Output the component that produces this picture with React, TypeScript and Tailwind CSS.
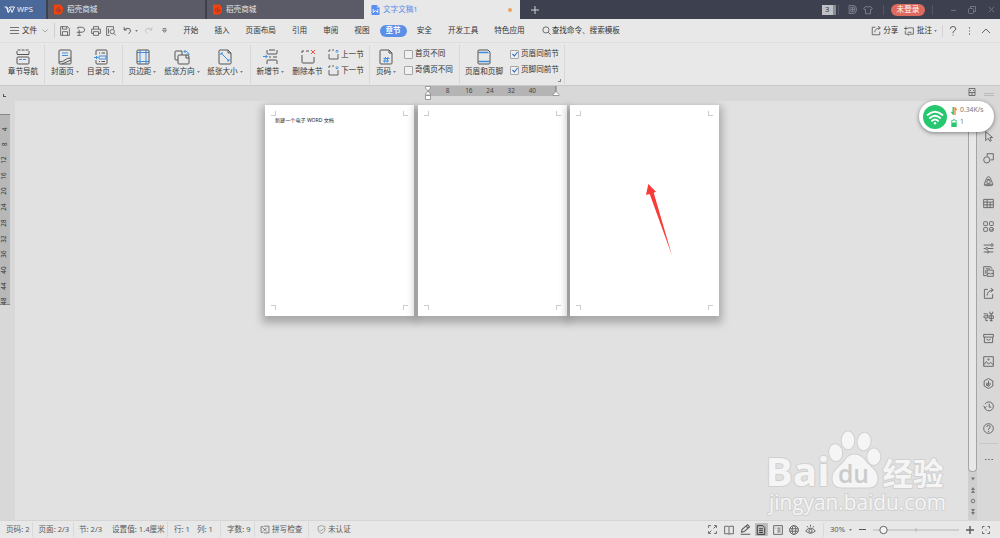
import type { ReactNode } from "react";

const FONT = "font-['Noto_Sans','Noto_Sans_CJK_SC',sans-serif]";

function Svg({ children, className = "size-3", box = "0 0 16 16", sw = 1.3 }: { children: ReactNode; className?: string; box?: string; sw?: number }) {
  return (
    <svg viewBox={box} className={`block shrink-0 ${className}`} fill="none" stroke="currentColor" strokeWidth={sw} strokeLinejoin="round">
      {children}
    </svg>
  );
}

const Caret = ({ className = "" }: { className?: string }) => (
  <svg viewBox="0 0 4 3" className={`block h-[2px] w-[3px] shrink-0 ${className}`}>
    <path d="M0 0h4L2 3z" fill="#777" />
  </svg>
);

function DocerTab() {
  return (
    <div className="flex h-[19px] w-[157px] shrink-0 items-center bg-[#5a5b66] pl-[6px] text-[#e3e3e6]">
      <svg viewBox="0 0 10 11" className="mr-1 block h-[11px] w-[9px]">
        <path d="M1 0h5.500q3.500 1.500 3.500 5.500T6.500 11H1Q0 11 0 10V1Q0 0 1 0z" fill="#f3420f" />
        <path d="M5.200 2.300v5M2.500 5q0 3.500 2.500 3.600T7.600 5M3.400 4.300l3.500 3.500" stroke="#8a3b28" strokeWidth=".9" fill="none" />
      </svg>
      <span>稻壳商城</span>
    </div>
  );
}

function TitleBar() {
  return (
    <header className="flex h-[19px] items-center bg-[#3d404e]">
      <div className="mr-[2px] flex h-full w-[46px] items-center bg-[#4a6899] pl-1 text-[#f0f3f8]">
        <Svg className="mr-[2px] h-[8px] w-[11px]" box="0 0 22 16" sw={2}>
          <path d="M1 2h5l3 11 4-8 3 8 5-11h-9M5 2l3 11M9 5l3-3" />
        </Svg>
        <span>WPS</span>
      </div>
      <DocerTab />
      <div className="w-[2px] shrink-0" />
      <DocerTab />
      <div className="flex h-full w-[156px] shrink-0 items-center bg-[#e8e8e8] pl-[7px] text-[#5a8fe8]">
        <svg viewBox="0 0 9 11" className="mr-[3px] block h-[10px] w-[9px]">
          <path d="M1 0h5l3 3v7q0 1-1 1H1Q0 11 0 10V1Q0 0 1 0z" fill="#5a8ff0" />
          <path d="M6 0v3h3z" fill="#a9c5fa" />
          <path d="M2 4.500v3.700l2.500-2 2.500 2V4.500" stroke="white" fill="none" />
        </svg>
        <span>文字文稿1</span>
        <span className="mr-[8px] ml-auto size-[4px] rounded-full bg-[#e9a15b]" />
      </div>
      <Svg className="ml-[11px] size-[8px] text-[#d0d1d6]" box="0 0 8 8" sw={1}><path d="M4 0v8M0 4h8" /></Svg>
      <div className="ml-auto flex h-full items-center text-[#777a88]">
        <span className="flex h-[10px] w-[14px] items-center border-r-[3px] border-[#8b8d95] bg-[#c0c1c5] pl-[3px] text-[#333]">3</span>
        <span className="ml-[2px] h-[10px] w-px bg-[#555866]" />
        <Svg className="ml-[9px] size-[9px]" sw={1.8}><path d="M2 1h8q5 2 5 7t-5 7H2zM5 4h4q3 1 3 4t-3 4H5zM5 8h7M8 4v8" /></Svg>
        <Svg className="ml-[6px] size-[10px]" sw={1.6}><path d="M5 2 1 5l2 3 1-1v7h8V7l1 1 2-3-4-3q-3 3-6 0z" /></Svg>
        <span className="ml-[10px] h-[10px] w-px bg-[#555866]" />
        <span className="ml-[7px] flex h-[12px] w-[34px] items-center justify-center rounded-full bg-[#dc6a5e] text-white">未登录</span>
        <span className="ml-[7px] h-[10px] w-px bg-[#555866]" />
        <Svg className="ml-[17px] size-[7px]" box="0 0 8 8" sw={1}><path d="M1 5h6" /></Svg>
        <Svg className="ml-[11px] size-[8px]" box="0 0 8 8" sw={0.9}><rect x=".5" y="2.500" width="5" height="5" rx="1" /><path d="M2.500 2.500V.5h5v5h-2" /></Svg>
        <Svg className="mr-[5px] ml-[12px] size-[7px]" box="0 0 8 8" sw={1}><path d="m1 1 6 6M7 1 1 7" /></Svg>
      </div>
    </header>
  );
}

function MenuBar() {
  const before = ["开始", "插入", "页面布局", "引用", "审阅", "视图"];
  const after = ["安全", "开发工具", "特色应用"];
  return (
    <nav className="flex h-[24px] items-center border-b border-[#dedede] text-[#333]">
      <Svg className="ml-[10px] size-[9px] text-[#666]" box="0 0 9 9" sw={0.9}><path d="M0 1.500h9M0 4.500h9M0 7.500h9" /></Svg>
      <span className="ml-[3px]">文件</span>
      <Svg className="ml-[5px] h-[4px] w-[6px] text-[#999]" box="0 0 6 4" sw={0.8}><path d="m.5.5 2.500 2.500L5.500.5" /></Svg>
      <span className="ml-[6px] h-[15px] w-px bg-[#cfcfcf]" />
      <div className="ml-[5px] flex items-center text-[#555]">
        <Svg className="size-[10px]"><path d="M1 1h11l3 3v11H1zM4 1v4h7V1M4 15V9h8v6" /></Svg>
        <Svg className="ml-[6px] size-[10px]"><path d="M3 5V2h7q4 1 4 4t-4 4H5v5M1 10h6M5 6v4M2 15h6" /></Svg>
        <Svg className="ml-[5px] size-[10px]"><path d="M4 5V1h8v4M4 12H1V5h14v7h-3M4 9h8v6H4z" /></Svg>
        <Svg className="ml-[5px] size-[10px]"><path d="M6 15H1V1h11v4M4 4v8" /><circle cx="10" cy="9" r="3.500" /><path d="m12.500 12 3 3" /></Svg>
        <Svg className="ml-[7px] size-[9px]" sw={1.6}><path d="M2 2v5h5M2 7q5-5 10-2 4 4-2 9" /></Svg>
        <Caret className="ml-[3px]" />
        <Svg className="ml-[6px] size-[9px] text-[#bbb]" sw={1.4}><path d="M14 2v5H9M14 7Q9 2 4 5q-4 4 2 9" /></Svg>
        <Svg className="ml-[9px] size-[5px]" box="0 0 8 8" sw={1.2}><path d="M1 1h6M1 3.500h6L4 7z" /></Svg>
      </div>
      <div className="ml-[16px] flex items-center gap-4">
        {before.map((t) => <span key={t}>{t}</span>)}
        <span className="-mx-[6px] flex h-[12px] items-center rounded-full bg-[#5a8fe8] px-[6px] font-bold text-white">章节</span>
        {after.map((t) => <span key={t}>{t}</span>)}
      </div>
      <Svg className="ml-[17px] size-[9px] text-[#444]"><circle cx="7" cy="7" r="5.500" /><path d="m11 11 4.500 4.500" /></Svg>
      <span className="ml-px">查找命令、搜索模板</span>
      <div className="ml-auto flex items-center">
        <Svg className="size-[10px] text-[#555]"><path d="M7 2H2v12h12V9M6 10q0-6 8-7M11 0l4 3-4 3" /></Svg>
        <span className="ml-[2.500px]">分享</span>
        <Svg className="ml-[6px] size-[10px] text-[#555]"><path d="M6 3h9v10H9l-2 2v-2H2V8M0 4h6M3 1v6M6 10h6" /></Svg>
        <span className="ml-[2.500px]">批注</span>
        <Caret className="ml-[2px]" />
        <span className="ml-[5px] h-[12px] w-px bg-[#d3d3d3]" />
        <Svg className="ml-[6px] h-[10px] w-[8px] text-[#555]" box="0 0 8 10" sw={0.9}><path d="M1.200 3q0-2.500 2.800-2.500T6.800 3Q6.800 4 5 5 4 5.600 4 7.200M4 8.500v1" /></Svg>
        <Svg className="ml-[11px] h-[8px] w-[3px] text-[#666]" box="0 0 3 8" sw={1.1}><path d="M1.500.2v1.200M1.500 3.400v1.200M1.500 6.600v1.200" /></Svg>
        <Svg className="mr-[9px] ml-[10px] h-[6px] w-[10px] text-[#555]" box="0 0 10 6" sw={0.9}><path d="m1 5 4-4 4 4" /></Svg>
      </div>
    </nav>
  );
}

function Tool({ label, caret, className, children }: { label: string; caret?: boolean; className: string; children: ReactNode }) {
  return (
    <div className={`flex shrink-0 flex-col items-center pt-[4px] ${className}`}>
      <Svg className="size-4 text-[#555]" sw={1}>{children}</Svg>
      <div className="mt-[3px] flex h-[9px] items-center gap-[2px] whitespace-nowrap">
        <span>{label}</span>
        {caret && <Caret />}
      </div>
    </div>
  );
}

function Check({ label, on }: { label: string; on?: boolean }) {
  return (
    <div className="flex h-[9px] items-center gap-[2px] whitespace-nowrap">
      <span className="flex size-[9px] items-center justify-center rounded-[1px] border border-[#a5a5a5] bg-[#f0f0f0]">
        {on && <Svg className="size-[6px] text-[#2f78c8]" box="0 0 6 6" sw={1.2}><path d="m.5 3 2 2L5.500 1" /></Svg>}
      </span>
      <span>{label}</span>
    </div>
  );
}

function SectionStep({ label, up }: { label: string; up?: boolean }) {
  return (
    <div className="flex h-[10px] items-center gap-[2px] whitespace-nowrap">
      <Svg className="size-[11px] text-[#555]" box="0 0 11 11" sw={0.9}>
        <path d="M1 5v5h9V5" />
        <path d="M1 3V1h1.500M4 1h2" />
        <path d={up ? "M9 4V1M7.500 2.500 9 1l1.500 1.500" : "M9 1v3M7.500 2.500 9 4l1.500-1.500"} stroke="#3e8ee0" />
      </Svg>
      <span>{label}</span>
    </div>
  );
}

const group = "relative flex h-[39px] shrink-0 border-r border-[#d8d8d8]";
const stack = "flex flex-col gap-[7px] pt-[5px]";

function Ribbon() {
  return (
    <section className="flex h-[43px] items-center border-b border-[#c9c9c9] text-[#333]">
      <div className={`${group} w-[45px] pl-[2px]`}>
        <Tool label="章节导航" className="w-[42px]">
          <path d="M2 5V2q0-1 1-1h10q1 0 1 1v3" strokeDasharray="3 1" /><path d="M2 5.500h12" /><path d="M3 8h10q1 0 1 1v5q0 1-1 1H3q-1 0-1-1V9q0-1 1-1z" /><path d="M4 10.500h8" stroke="#3e8ee0" strokeDasharray="3 1" />
        </Tool>
      </div>
      <div className={`${group} w-[78px] pl-[2px]`}>
        <Tool label="封面页" caret className="w-[36px]">
          <rect x="2" y="1" width="12" height="14" rx="1" /><path d="M5 4h6M5 6.500h6" stroke="#3e8ee0" /><path d="M2 13q4 0 6-2t6-2M5 15l9-4" />
        </Tool>
        <Tool label="目录页" caret className="w-[36px]">
          <path d="M3 6V2q0-1 1-1h9q1 0 1 1v12q0 1-1 1H4q-1 0-1-1v-3M6 4h1M8.500 4H12M6 12.500h1M8.500 12.500H12" /><path d="M1 8.500h4M3.500 7v3M6 7h7v3H6z" stroke="#3e8ee0" />
        </Tool>
      </div>
      <div className={`${group} w-[128px]`}>
        <Tool label="页边距" caret className="w-[39px]">
          <path d="M5 1v14M11 1v14M2 3.500h12M2 12.500h12" stroke="#3e8ee0" /><rect x="2" y="1" width="12" height="14" rx="1" />
        </Tool>
        <Tool label="纸张方向" caret className="w-[40px]">
          <path d="M4 11H2q-1 0-1-1V3q0-1 1-1h6v4" /><path d="M5 6h8q2 0 2 2v6q0 1-1 1H5q-1 0-1-1V7q0-1 1-1zM12 6v3h3" /><path d="M10 2.500q4-1 4.500 3M11.500 1 10 2.500 11.500 4M13 4.500l1.500 1.500L16 4.500" stroke="#3e8ee0" />
        </Tool>
        <Tool label="纸张大小" caret className="w-[46px]">
          <path d="M11 1H3q-1 0-1 1v12q0 1 1 1h10q1 0 1-1V4zM11 1v3h3" /><path d="m4 4 8 8M4 6V4h2M10 12h2v-2" stroke="#3e8ee0" />
        </Tool>
      </div>
      <div className={`${group} w-[119px]`}>
        <Tool label="新增节" caret className="w-[39px]">
          <path d="M4 1v3q0 1 1 1h8q1 0 1-1V1M4 15v-3q0-1 1-1h8q1 0 1 1v3M6 8h2M10 8h4M6 1h6" /><path d="M0 7.500h4M2.500 6 4.500 7.500 2.500 9" stroke="#3e8ee0" />
        </Tool>
        <Tool label="删除本节" className="w-[35px]">
          <path d="M2 6v7q0 1 1 1h10q1 0 1-1V8M2 4V2h2M6 2h3" /><path d="m11 1 4 4M15 1l-4 4" stroke="#e2504a" />
        </Tool>
        <div className="flex flex-col gap-[6px] pt-[5px] pl-[3px]">
          <SectionStep label="上一节" up />
          <SectionStep label="下一节" />
        </div>
      </div>
      <div className={`${group} w-[90px]`}>
        <Tool label="页码" caret className="w-[32px]">
          <path d="M11 1H3q-1 0-1 1v12q0 1 1 1h10q1 0 1-1V4zM11 1v3h3" /><path d="m7.500 8-1 5.500M10 8l-1 5.500M5.500 9.500h6M5 12h6" stroke="#3e8ee0" />
        </Tool>
        <div className={`${stack} pl-[2px]`}>
          <Check label="首页不同" />
          <Check label="奇偶页不同" />
        </div>
      </div>
      <div className={`${group} w-[105px]`}>
        <Tool label="页眉和页脚" className="w-[48px]">
          <path d="M2.500 3.500h10M2.500 12.500h11" stroke="#3e8ee0" strokeWidth="1.600" /><path d="M12 1H3q-1 0-1 1v12q0 1 1 1h10q1 0 1-1V3z" />
        </Tool>
        <div className={`${stack} pl-[2px]`}>
          <Check label="页眉同前节" on />
          <Check label="页脚同前节" on />
        </div>
        <span className="absolute right-[3px] bottom-[2px] size-[3px] border-r border-b border-[#888]" />
      </div>
    </section>
  );
}

function TopRuler() {
  return (
    <div className="relative ml-[428px] flex h-[10px] w-[128px] items-center bg-[#b4b4b4] pl-[9px] text-[6.400px] text-[#444]">
      {[8, 16, 24, 32, 40].map((n) => <span key={n} className="w-[21.200px] text-center">{n}</span>)}
      <svg viewBox="0 0 8 14" className="absolute top-0 -left-[4px] h-[14px] w-[8px]" fill="#fff" stroke="#888" strokeWidth=".8">
        <path d="M1.500.5h5v1.500L4 5 1.500 2zM4 5l2.500 3v1h-5V8zM1.500 9.500h5v4h-5z" />
      </svg>
      <svg viewBox="0 0 8 10" className="absolute top-0 -right-[4px] h-[10px] w-[8px]">
        <path d="M4 0v6" stroke="#777" /><path d="m4 5.500 3 3v1H1v-1z" fill="#fff" stroke="#888" strokeWidth=".8" />
      </svg>
    </div>
  );
}

function LeftRuler() {
  return (
    <aside className="w-[15px] shrink-0 bg-[#d8d8d8]">
      <div className="mt-[13px] flex h-[191px] w-[10px] flex-col border-y border-[#888] bg-[#b8b8b8] pt-[6px] text-[6.200px] text-[#333]">
        {[4, 8, 12, 16, 20, 24, 28, 32, 36, 40, 44, 48].map((n) => (
          <span key={n} className="flex h-[15.700px] w-[10px] shrink-0 items-center justify-center"><span className="-rotate-90">{n}</span></span>
        ))}
      </div>
    </aside>
  );
}

function Sheet({ children }: { children?: ReactNode }) {
  return (
    <div className="relative h-[211px] w-[149px] bg-white shadow-[0_4px_8px_3px_rgba(0,0,0,0.25)]">
      <span className="absolute top-[6px] left-[6px] size-[5px] border-r border-b border-[#ccc]" />
      <span className="absolute top-[6px] right-[6px] size-[5px] border-b border-l border-[#ccc]" />
      <span className="absolute bottom-[6px] left-[6px] size-[5px] border-t border-r border-[#ccc]" />
      <span className="absolute right-[6px] bottom-[6px] size-[5px] border-t border-l border-[#ccc]" />
      {children}
    </div>
  );
}

function Watermark() {
  return (
    <svg viewBox="0 0 190 94" className="absolute top-[325px] left-[747px] h-[94px] w-[190px]" fill="#f5f5f5" stroke="#d0d0d0" strokeWidth="2" strokeLinejoin="round" style={{ paintOrder: "stroke" }}>
      <g fontFamily="'Open Sans','Noto Sans',sans-serif">
        <text x="3.500" y="60" fontSize="38.500" fontWeight="700" textLength="64" lengthAdjust="spacingAndGlyphs">Bai</text>
        <ellipse cx="73.700" cy="26.700" rx="6.500" ry="8.500" transform="rotate(-8 73 27)" />
        <ellipse cx="86" cy="14.300" rx="6.300" ry="9" />
        <ellipse cx="102" cy="15.500" rx="6.500" ry="8.800" transform="rotate(8 102 16)" />
        <ellipse cx="111.800" cy="30.700" rx="6.500" ry="8.200" />
        <path d="M92.500 28.500c5 0 8.500 3 11.500 7 5 6 11.500 9 11.500 17 0 6-3.500 9-9 9h-27c-6 0-9-3.500-9-9 0-8 6.500-11 11.500-17 3-4 5.500-7 10.500-7z" />
        <text x="76" y="57" fontSize="24.500" fontWeight="600" stroke="none" fill="#cbcbcb" textLength="31" lengthAdjust="spacingAndGlyphs">du</text>
        <text x="7" y="84" fontSize="22" textLength="177" lengthAdjust="spacingAndGlyphs">jingyan.baidu.com</text>
      </g>
      <text x="120.500" y="58.500" fontSize="31" fontWeight="700" fontFamily="'Noto Sans CJK SC',sans-serif" textLength="61" lengthAdjust="spacingAndGlyphs">经验</text>
    </svg>
  );
}

function Canvas() {
  return (
    <main className="relative min-w-0 flex-1 overflow-hidden bg-[#e1e1e1]">
      <div className="flex gap-[3.500px] pt-[4px] pl-[250px]">
        <Sheet>
          <p className="mt-[13px] ml-[10px] text-[5.100px] whitespace-nowrap text-[#222]">新建一个电子 WORD 文档</p>
        </Sheet>
        <Sheet />
        <Sheet>
          <svg viewBox="0 0 26 74" className="absolute top-[79px] left-[76px] h-[74px] w-[26px]">
            <path d="M2.300 0 10 7.700 7.700 8.700 26 71.500 3.700 10 0 11z" fill="#f93a37" />
          </svg>
        </Sheet>
      </div>
      <Watermark />
    </main>
  );
}

function ScrollBar() {
  return (
    <div className="flex w-[9px] shrink-0 flex-col items-center bg-[#cfcfcf] text-[#777]">
      <div className="h-[371px] w-[9px] rounded-b-[4px] border border-t-0 border-[#a5a5a5] bg-[#e8e8e8]" />
      <div className="flex flex-col items-center gap-[5px] pt-[4px]">
        <Svg className="size-[6px]" box="0 0 6 6"><path d="M1 1.500h4L3 4.500z" fill="currentColor" stroke="none" /></Svg>
        <Svg className="size-[6px]" box="0 0 6 6"><path d="m1 3 2-3 2 3zM1 6l2-3 2 3z" fill="currentColor" stroke="none" /></Svg>
        <Svg className="size-[6px]" box="0 0 6 6" sw={1}><circle cx="3" cy="3" r="1.800" /></Svg>
        <Svg className="size-[6px]" box="0 0 6 6"><path d="m1 0 2 3 2-3zM1 3l2 3 2-3z" fill="currentColor" stroke="none" /></Svg>
      </div>
    </div>
  );
}

const sideIcons: ReactNode[] = [
  <path d="M4 1v13l3.500-3.500L10 15l2-1-2-4.500h4z" />,
  <><circle cx="5.500" cy="10" r="4.500" /><path d="M6 5V1h9v9h-4" /></>,
  <><path d="M8 1q2 0 3 3l3 7q1 3-2 3H4q-3 0-2-3l3-7q1-3 3-3z" /><circle cx="8" cy="8.500" r="2.500" /><path d="M6 5h4M3 12h10" /></>,
  <path d="M1 2h14v12H1zM1 6h14M1 10h14M6 2v12M10.500 6v8" />,
  <><rect x="1" y="1" width="5.500" height="5.500" rx="1" /><rect x="9.500" y="1" width="5.500" height="5.500" rx="1" /><rect x="1" y="9.500" width="5.500" height="5.500" rx="1" /><rect x="9.500" y="9.500" width="5.500" height="5.500" rx="2" /><path d="m11 12 1.500 1.500L15 11" /></>,
  <><path d="M1 3h10M1 8h3M7 8h8M1 13h4M8 13h7" /><circle cx="13" cy="3" r="1.800" /><circle cx="5.500" cy="8" r="1.500" /><circle cx="7" cy="13" r="1.500" /></>,
  <path d="M5 14H1V1h10l2 3M4 4h6M4 6v5M6 6h9v9H6zM6 13l3-3 2 2 2-2 2 2" />,
  <path d="M7 2H2v13h12V9M6 11q0-7 8-8M11 0l4 3-4 3" />,
  <><path d="M1 4h4q2 0 2 2v4H3q-2 0-2-1.500T3 7h4M10 1v3h4V1M9 7h6v4H9zM12 4v11M7 14H4v-3M10 14h4" /></>,
  <path d="M1 2h14v4H1zM2 6v8h12V6M5 9q3 3 6 0" />,
  <><path d="M1 1h14v14H1zM1 13l4-5 3 4 3-3 4 4" /><circle cx="8" cy="5" r="1" /></>,
  <><path d="m8 .7 6.300 3.600v7.400L8 15.300l-6.300-3.600V4.300z" /><path d="M8 4v7M6 7v4M10 7q2 3-2 5-4-1-3-4" /></>,
  <><path d="M2.500 10A6.500 6.500 0 1 0 3 4.500M1 7l1.500 3L5 8M9 4v5h3" /></>,
  <><circle cx="8" cy="8" r="7" /><path d="M5.500 6q0-2.500 2.500-2.500T10.500 6Q10.500 7.500 8 8.500V10M8 11.500V13" /></>,
];

function SideBar() {
  return (
    <aside className="flex w-[23px] shrink-0 flex-col items-center bg-[#d8d8d8] text-[#666]">
      <div className="flex flex-col items-center pt-[24px]">
        {sideIcons.map((icon, i) => (
          <span key={i} className="flex h-[22.500px] items-center"><Svg className="size-[11px]" sw={1.4}>{icon}</Svg></span>
        ))}
      </div>
      <span className="mt-[3px] h-px w-[19px] bg-[#c6c6c6]" />
      <Svg className="mt-[14px] h-[3px] w-[10px]" box="0 0 10 3" sw={1}><path d="M1 1.500h1.500M4.200 1.500h1.500M7.500 1.500H9" /></Svg>
    </aside>
  );
}

function SpeedWidget() {
  return (
    <div className="absolute top-[101px] left-[919px] flex h-[31px] w-[75px] items-center rounded-full bg-white pl-[4px] shadow-[0_1px_4px_rgba(0,0,0,0.45)]">
      <svg viewBox="0 0 24 24" className="block size-6 shrink-0" fill="none" stroke="white" strokeWidth="1.900" strokeLinecap="round">
        <circle cx="12" cy="12" r="12" fill="#27c76f" stroke="none" />
        <path d="M4.500 10q7.500-6.500 15 0M6.800 13q5.200-4.500 10.400 0M9 15.800q3-2.600 6 0" />
        <circle cx="12" cy="18.300" r="1.200" fill="white" stroke="none" />
      </svg>
      <div className="ml-[4px] flex flex-col gap-[4px] text-[6.800px] text-[#777]">
        <div className="flex h-[8px] items-center gap-[3px]">
          <svg viewBox="0 0 6 8" className="block h-[8px] w-[6px] shrink-0" strokeWidth="1.400" fill="none"><path d="M2.200 0v7L.4 5" stroke="#27c76f" /><path d="M4 8V1l1.800 2" stroke="#ef8a3c" /></svg>
          <span>0.34K/s</span>
        </div>
        <div className="flex h-[8px] items-center gap-[3px]">
          <svg viewBox="0 0 6 8" className="block h-[8px] w-[6px] shrink-0"><path d="M.7 3.500V1.500h1.500V.6h1.600v.9h1.500v2" stroke="#27c76f" fill="none" strokeWidth=".8" /><path d="M.3 3.500h5.400V8H.3z" fill="#27c76f" /></svg>
          <span>1</span>
        </div>
      </div>
    </div>
  );
}

function StatusBar() {
  const cell = "flex h-[15px] shrink-0 items-center whitespace-nowrap";
  const line = "border-r border-[#d9d9d9]";
  return (
    <footer className="flex h-[18px] items-center border-t border-[#d5d5d5] bg-[#e8e8e8] text-[#5a5a5a]">
      <span className={`${cell} ${line} w-[33px] pl-[6px]`}>页码: 2</span>
      <span className={`${cell} ${line} w-[41px] pl-[5.500px]`}>页面: 2/3</span>
      <span className={`${cell} w-[38px] pl-[5px]`}>节: 2/3</span>
      <span className={`${cell} ${line} w-[56px]`}>设置值: 1.4厘米</span>
      <span className={`${cell} w-[29px] pl-[6px]`}>行: 1</span>
      <span className={`${cell} ${line} w-[24px]`}>列: 1</span>
      <span className={`${cell} ${line} w-[34px] pl-[6px]`}>字数: 9</span>
      <span className={`${cell} ${line} w-[54px] gap-[2px] pl-[5px]`}>
        <Svg className="h-[9px] w-[10px]" sw={1.3}><path d="M5 3H1v10h4M6 2h9v12H6M4 5l7 6M11 5l-6 6" /></Svg>拼写检查
      </span>
      <span className={`${cell} gap-[2px] pl-[8px]`}>
        <Svg className="size-[9px] text-[#888]" sw={1.3}><path d="m8 1 6 2v6q-1 4-6 6-5-2-6-6V3zM5 8l2.500 2.500L12 6" /></Svg>未认证
      </span>
      <div className="ml-auto flex items-center">
        <div className="flex w-[114px] items-center gap-[3.300px]">
          <span className="flex size-[13px] items-center justify-center"><Svg className="size-[9px]" sw={1.6}><path d="M1 5V1h4M11 1h4v4M15 11v4h-4M5 15H1v-4M10 6l4-4M6 10l-4 4" /></Svg></span>
          <span className="flex size-[13px] items-center justify-center"><Svg className="size-[10px]" sw={1.4}><path d="M1 2h6l1 1 1-1h6v12H9l-1 1-1-1H1zM8 3v12" /></Svg></span>
          <span className="flex size-[13px] items-center justify-center"><Svg className="size-[11px]" sw={1.5}><path d="m2 12 1-4 8-7 3 3-8 7zM1 15h14M9 3l3 3" /></Svg></span>
          <span className="flex size-[13px] items-center justify-center rounded-[1px] bg-[#bdbdbd] text-[#333]"><Svg className="size-[10px]" sw={1.5}><path d="M2 1h9l3 3v11H2zM5 6h6M5 9h6M5 12h6" /></Svg></span>
          <span className="flex size-[13px] items-center justify-center"><Svg className="size-[10px]" sw={1.4}><path d="M1 1h14v14H1zM4 5h1M7 5h5M7 8h5M7 11h5" /></Svg></span>
          <span className="flex size-[13px] items-center justify-center"><Svg className="size-[10px]" sw={1.4}><circle cx="8" cy="8" r="7" /><ellipse cx="8" cy="8" rx="3" ry="7" /><path d="M1 6h14M1 10h14" /></Svg></span>
          <span className="flex size-[13px] items-center justify-center"><Svg className="size-[11px]" sw={1.3}><path d="M1 10q7-8 14 0-7 7-14 0zM8 1v3M3 3l1.500 2M13 3l-1.500 2" /><circle cx="8" cy="10" r="2.300" /></Svg></span>
        </div>
        <span className="ml-[3px] h-[14px] w-px bg-[#d9d9d9]" />
        <span className="ml-[6px] w-[18px]">30%</span>
        <Caret className="ml-[1px]" />
        <span className="ml-[7px] h-[1.500px] w-[7px] bg-[#555]" />
        <svg viewBox="0 0 86 10" className="ml-[7px] block h-[10px] w-[86px]"><path d="M0 5h86M43 3v4" stroke="#b5b5b5" /><circle cx="10.500" cy="5" r="3.700" fill="#f4f4f4" stroke="#666" /></svg>
        <Svg className="ml-[7px] size-[8px]" box="0 0 8 8" sw={1.4}><path d="M4 0v8M0 4h8" /></Svg>
        <Svg className="mr-[10px] ml-[8px] size-[8px]" sw={1.8}><path d="M1 5V1h4M11 1h4v4M15 11v4h-4M5 15H1v-4M7 8h2" /></Svg>
      </div>
    </footer>
  );
}

export default function App() {
  return (
    <div className={`relative flex h-[538px] w-[1000px] flex-col overflow-hidden bg-[#e8e8e8] text-[7.600px] leading-none ${FONT}`}>
      <TitleBar />
      <MenuBar />
      <Ribbon />
      <div className="flex h-[15px] shrink-0 items-start bg-[#d8d8d8]">
        <span className="mt-[8px] -mr-[6px] ml-[3px] size-[3px] border-b border-l border-[#555]" />
        <TopRuler />
        <Svg className="mt-[2px] ml-auto size-[8px] text-[#555]" sw={1.6}><path d="M2 1h12v14H2zM2 9h12M5 4v2M11 4v2M6 12h4" /></Svg>
        <span className="mt-[7px] mr-[6px] ml-[8px] h-[3px] w-[10px] border-y border-[#bbb]" />
      </div>
      <div className="flex min-h-0 flex-1">
        <LeftRuler />
        <Canvas />
        <ScrollBar />
        <SideBar />
      </div>
      <StatusBar />
      <SpeedWidget />
    </div>
  );
}
